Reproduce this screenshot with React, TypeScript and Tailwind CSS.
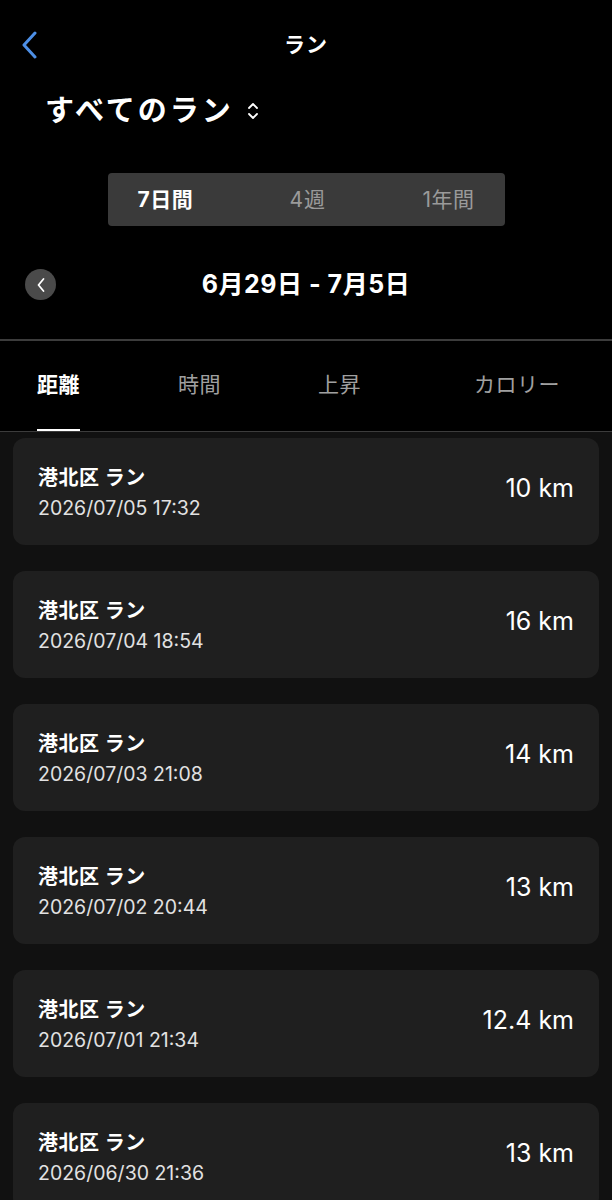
import React from 'react';

interface RunRow {
  place: string;
  dateTime: string;
  distance: string;
}

const runs: RunRow[] = [
  { place: '港北区 ラン', dateTime: '2026/07/05 17:32', distance: '10 km' },
  { place: '港北区 ラン', dateTime: '2026/07/04 18:54', distance: '16 km' },
  { place: '港北区 ラン', dateTime: '2026/07/03 21:08', distance: '14 km' },
  { place: '港北区 ラン', dateTime: '2026/07/02 20:44', distance: '13 km' },
  { place: '港北区 ラン', dateTime: '2026/07/01 21:34', distance: '12.4 km' },
  { place: '港北区 ラン', dateTime: '2026/06/30 21:36', distance: '13 km' },
];

const tabs = [
  { label: '距離', width: 'w-[141px]', active: true },
  { label: '時間', width: 'w-[140px]', active: false },
  { label: '上昇', width: 'w-[156px]', active: false },
  { label: 'カロリー', width: 'w-[120px]', active: false },
];

export default function App() {
  return (
    <div className="min-h-screen bg-[#111111] text-white font-['Inter','Noto_Sans_CJK_JP',sans-serif]">
      {/* ヘッダー */}
      <div className="bg-black pt-[15px]">
        <div className="h-[60px] grid grid-cols-[1fr_auto_1fr] items-center">
          <div className="pl-[21px] flex items-center">
            <svg width="18" height="28" viewBox="0 0 18 28" fill="none">
              <path d="M14 2 L3 14 L14 26" stroke="#4d8fe6" strokeWidth="3" strokeLinecap="round" strokeLinejoin="round" />
            </svg>
          </div>
          <div className="text-[21px] font-semibold tracking-[1px]">ラン</div>
          <div />
        </div>

        <div className="h-[72px] pl-[45px] flex items-center gap-[12px]">
          <span className="text-[29px] font-bold tracking-[3px]">すべてのラン</span>
          <svg width="14" height="22" viewBox="0 0 14 22" fill="none">
            <path d="M3 8 L7 4 L11 8" stroke="white" strokeWidth="1.8" strokeLinecap="round" strokeLinejoin="round" />
            <path d="M3 14 L7 18 L11 14" stroke="white" strokeWidth="1.8" strokeLinecap="round" strokeLinejoin="round" />
          </svg>
        </div>

        {/* 期間セグメント */}
        <div className="mt-[26px] mx-auto w-[397px] h-[53px] rounded-[4px] bg-[#3a3a3a] flex items-center justify-between px-[30px] text-[21px]">
          <span className="font-bold tracking-[0.5px]">7日間</span>
          <span className="text-[#9a9a9a] tracking-[1px]">4週</span>
          <span className="text-[#9a9a9a] tracking-[0.5px]">1年間</span>
        </div>

        {/* 日付範囲 */}
        <div className="mt-[40px] h-[32px] grid grid-cols-[1fr_auto_1fr] items-center">
          <div className="pl-[25px]">
            <div className="w-[31px] h-[31px] rounded-full bg-[#4a4a4a] flex items-center justify-center">
              <svg width="10" height="16" viewBox="0 0 10 16" fill="none">
                <path d="M7.5 2 L2.5 8 L7.5 14" stroke="white" strokeWidth="1.8" strokeLinecap="round" strokeLinejoin="round" />
              </svg>
            </div>
          </div>
          <div className="text-[25px] font-bold tracking-[0.5px]">6月29日 - 7月5日</div>
          <div />
        </div>

        <div className="mt-[41px] h-[1.5px] bg-[#3c3c3c]" />

        {/* タブ */}
        <div className="h-[90px] flex pl-[37px]">
          {tabs.map((t) => (
            <div key={t.label} className={`${t.width} flex`}>
              <div className="flex flex-col h-full">
                <div className={`flex-1 flex items-center text-[21px] tracking-[0.5px] ${t.active ? 'font-bold text-white' : 'text-[#a0a0a0]'}`}>
                  {t.label}
                </div>
                <div className={`h-[2px] ${t.active ? 'bg-white' : 'bg-transparent'}`} />
              </div>
            </div>
          ))}
        </div>
      </div>
      <div className="h-[1.5px] bg-[#3c3c3c]" />

      {/* ラン一覧 */}
      <div className="px-[13px] pt-[6px] flex flex-col gap-[26px]">
        {runs.map((r, idx) => (
          <div key={idx} className="h-[107px] rounded-[12px] bg-[#1f1f1f] flex items-center justify-between pl-[25px] pr-[25px]">
            <div className="flex flex-col gap-[4px]">
              <div className="text-[20px] leading-[28px] font-bold tracking-[0.5px]">{r.place}</div>
              <div className="text-[19.5px] leading-[24px] text-[#e2e2e2]">{r.dateTime}</div>
            </div>
            <div className="text-[25px] mb-[5px]">{r.distance}</div>
          </div>
        ))}
      </div>
    </div>
  );
}
